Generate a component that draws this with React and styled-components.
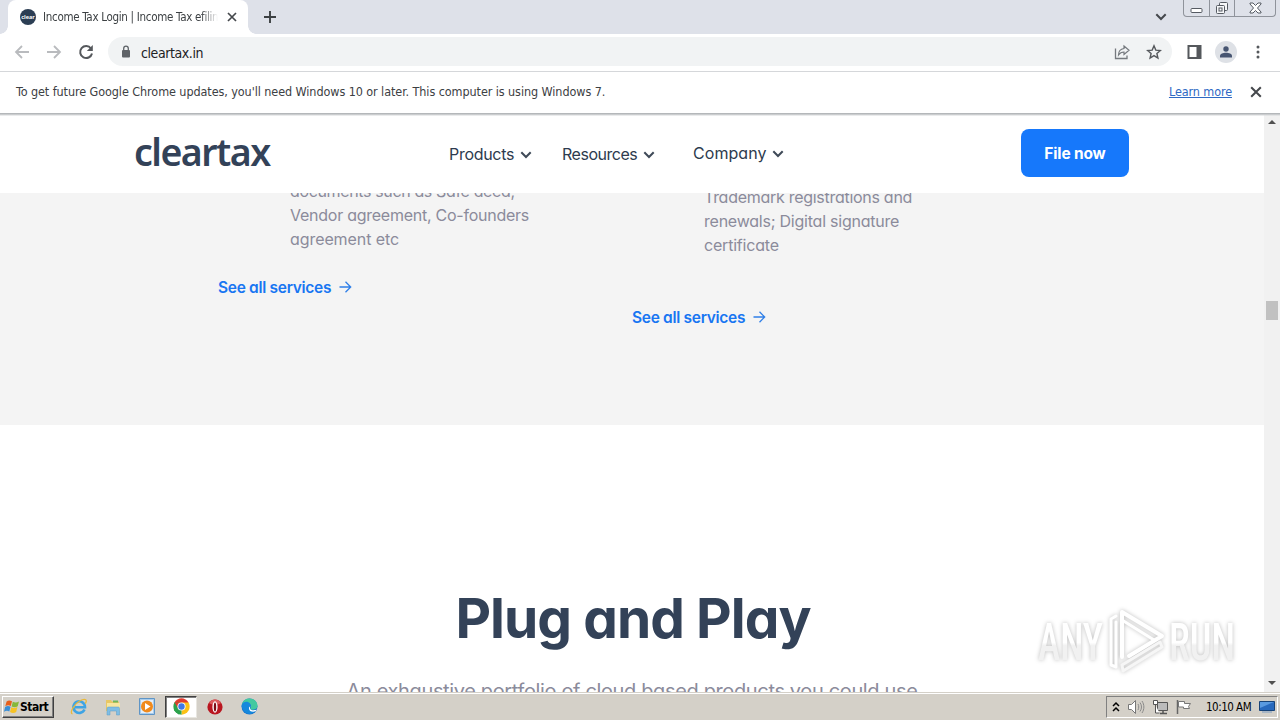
import React from 'react';
import styled, { createGlobalStyle, css } from 'styled-components';

const GlobalStyle = createGlobalStyle`
  * {
    box-sizing: border-box;
  }

  body {
    margin: 0;
    overflow: hidden;
    background: #fff;
  }

  svg {
    display: block;
    flex: none;
  }
`;

const uiFont = css`
  font-family: 'DejaVu Sans Condensed', 'DejaVu Sans', sans-serif;
  font-stretch: condensed;
`;

const siteFont = css`
  font-family: Inter, sans-serif;
  font-feature-settings: 'cv11' 1;
`;

const Desktop = styled.div`
  width: 1280px;
  height: 720px;
  display: flex;
  flex-direction: column;
  overflow: hidden;
  ${uiFont}
`;

/* browser chrome */

const TabStrip = styled.div`
  height: 34px;
  display: flex;
  align-items: flex-start;
  background: #dee1e9;
  padding-left: 8px;
`;

const Tab = styled.div`
  position: relative;
  width: 240px;
  height: 34px;
  display: flex;
  align-items: center;
  padding: 0 8px 0 12px;
  background: #fff;
  border-radius: 8px 8px 0 0;

  &::before,
  &::after {
    content: '';
    position: absolute;
    bottom: 0;
    width: 8px;
    height: 8px;
  }

  &::before {
    left: -8px;
    background: radial-gradient(circle at 0 0, transparent 7.5px, #fff 8px);
  }

  &::after {
    right: -8px;
    background: radial-gradient(circle at 100% 0, transparent 7.5px, #fff 8px);
  }
`;

const Favicon = styled.div`
  width: 16px;
  height: 16px;
  flex: none;
  border-radius: 50%;
  background: #2c3e54;
  color: #fff;
  font: bold 5.5px/16px 'Open Sans', sans-serif;
  text-align: center;
`;

const TabTitle = styled.span`
  width: 175px;
  margin-left: 7px;
  overflow: hidden;
  white-space: nowrap;
  font-size: 11.5px;
  line-height: 16px;
  color: #3c4043;
  letter-spacing: ${(p) => p.$spacing}px;
  mask-image: linear-gradient(to right, #000 158px, transparent 175px);
`;

const TabClose = styled.div`
  margin-left: 9px;
`;

const NewTab = styled.div`
  margin: 10px 0 0 15px;
`;

const WindowControls = styled.div`
  margin-left: auto;
  display: flex;
  align-items: flex-start;
`;

const TabSearch = styled.div`
  margin: 13px 16px 0 0;
`;

const CaptionButtons = styled.div`
  display: flex;
  width: 93px;
  height: 17px;
  margin-right: 4px;
  border: 1px solid #8f939b;
  border-top: 0;
  border-radius: 0 0 4px 4px;
`;

const CaptionButton = styled.div`
  width: ${(p) => p.$width}px;
  display: flex;
  justify-content: center;
  padding-top: 2px;

  & + & {
    border-left: 1px solid #8f939b;
  }
`;

const Toolbar = styled.div`
  height: 38px;
  display: flex;
  align-items: center;
  padding: 0 15px 2px 14px;
  background: #fff;
  border-bottom: 1px solid #d5d7da;
`;

const NavIcons = styled.div`
  display: flex;
  gap: 16px;
`;

const AddressBar = styled.div`
  width: 1064px;
  height: 29px;
  display: flex;
  align-items: center;
  margin-left: 14px;
  padding: 0 10px 0 12px;
  border-radius: 15px;
  background: #f1f3f4;
`;

const Url = styled.span`
  margin-left: 9px;
  padding-top: 2px;
  flex: 1;
  font-size: 14px;
  letter-spacing: ${(p) => p.$spacing}px;
  color: #202124;
`;

const AddressIcons = styled.div`
  display: flex;
  gap: 16px;
`;

const ToolbarActions = styled.div`
  display: flex;
  align-items: center;
  margin-left: auto;
`;

const Avatar = styled.div`
  width: 22px;
  height: 22px;
  display: flex;
  align-items: center;
  justify-content: center;
  margin: 0 14px 0 13px;
  border-radius: 50%;
  background: #dee1e6;
`;

const InfoBar = styled.div`
  height: 41px;
  display: flex;
  align-items: center;
  padding: 0 18px 1px 16px;
  background: #fff;
`;

const InfoText = styled.span`
  padding-bottom: 2px;
  font-size: 12.5px;
  letter-spacing: ${(p) => p.$spacing}px;
  color: #3c4043;
  white-space: nowrap;
`;

const InfoLink = styled.a`
  margin: 0 18px 0 auto;
  padding-bottom: 2px;
  font-size: 12.5px;
  letter-spacing: ${(p) => p.$spacing}px;
  color: #2e69c4;
  text-decoration: underline;
  white-space: nowrap;
`;

/* page */

const Viewport = styled.div`
  height: 579px;
  display: flex;
  overflow: hidden;
`;

const Page = styled.div`
  width: 1264px;
  position: relative;
  background: linear-gradient(#a9acb0, #d5d7d9 2px, #fff 3px);
  ${siteFont}
`;

const Header = styled.header`
  height: 80px;
  display: flex;
  align-items: flex-start;
  padding: 0 135px 0 134px;
`;

const Logo = styled.div`
  width: 315px;
  margin-top: 13px;
  font-family: 'Noto Sans', sans-serif;
  font-weight: 650;
  font-size: 37.5px;
  line-height: 52px;
  letter-spacing: ${(p) => p.$spacing}px;
  color: #334258;
`;

const Nav = styled.nav`
  display: flex;
  flex: 1;
`;

const NavItem = styled.div`
  width: ${(p) => p.$width}px;
  display: flex;
  align-items: center;
  gap: 6px;
  height: 20px;
  margin-top: ${(p) => p.$top}px;
  font-size: 16px;
  letter-spacing: ${(p) => p.$spacing}px;
  color: #2d3b4e;

  svg {
    margin-top: 2px;
  }
`;

const FileButton = styled.button`
  width: 108px;
  height: 48px;
  margin-top: 16px;
  border: 0;
  border-radius: 8px;
  background: #1678fb;
  color: #fff;
  font-size: 15.5px;
  font-weight: 650;
  letter-spacing: ${(p) => p.$spacing}px;
  ${siteFont}
`;

const Services = styled.section`
  height: 232px;
  display: flex;
  padding-left: 218px;
  overflow: hidden;
  background: #f4f4f4;
`;

const ServiceColumn = styled.div`
  width: 414px;
  margin-top: ${(p) => p.$top}px;
`;

const ServiceText = styled.p`
  margin: 0 0 ${(p) => p.$gap}px 72px;
  font-size: 16px;
  line-height: 24px;
  color: #8b8b9b;
`;

const ServiceLine = styled.span`
  display: block;
  white-space: nowrap;
  letter-spacing: ${(p) => p.$spacing}px;
`;

const ServiceLink = styled.a`
  display: flex;
  align-items: center;
  gap: 8px;
  height: 24px;
  font-size: 15.5px;
  font-weight: 600;
  letter-spacing: ${(p) => p.$spacing}px;
  color: #1876f2;
`;

const PlugSection = styled.section`
  display: flex;
  flex-direction: column;
  align-items: center;
  padding-top: 157px;
`;

const PlugTitle = styled.h2`
  margin: 0 0 23px 2px;
  font-size: 55px;
  line-height: 72px;
  font-weight: 650;
  letter-spacing: ${(p) => p.$spacing}px;
  color: #334258;
`;

const PlugText = styled.p`
  margin: 0;
  font-size: 20px;
  line-height: 28px;
  white-space: nowrap;
  letter-spacing: ${(p) => p.$spacing}px;
  color: #8b8b9b;
`;

const Scrollbar = styled.div`
  width: 16px;
  display: flex;
  flex-direction: column;
  align-items: center;
  justify-content: space-between;
  padding: 7px 0;
  background: linear-gradient(#a9acb0, #d5d7d9 2px, #f1f1f1 3px);
`;

const Track = styled.div`
  flex: 1;
  padding-top: 177px;
`;

const Thumb = styled.div`
  width: 12px;
  height: 19px;
  background: #c1c1c1;
`;

const Watermark = styled.div`
  position: absolute;
  left: 1032px;
  top: 490px;
  filter: drop-shadow(0 0 2px rgba(0, 0, 0, 0.26));
`;

/* taskbar */

const Taskbar = styled.div`
  height: 28px;
  display: flex;
  align-items: center;
  padding: 2px 2px;
  background: #d4d0c8;
  border-top: 1px solid #d4d0c8;
  box-shadow: inset 0 1px 0 #fff;
`;

const StartButton = styled.div`
  width: 52px;
  height: 22px;
  display: flex;
  align-items: center;
  padding-left: 1px;
  border: 1px solid;
  border-color: #fff #404040 #404040 #fff;
  box-shadow: inset -1px -1px 0 #808080;
  font-size: 12px;
  font-weight: bold;
  letter-spacing: ${(p) => p.$spacing}px;
  color: #000;
`;

const QuickLaunch = styled.div`
  display: flex;
  gap: 2px;
  margin-left: 9px;
`;

const LaunchSlot = styled.div`
  width: 32px;
  height: 22px;
  display: flex;
  align-items: center;
  justify-content: center;
  ${(p) =>
    p.$active &&
    css`
      background: #fff;
      border: 1px solid;
      border-color: #404040 #e8e6e0 #e8e6e0 #404040;
      box-shadow: inset 1px 1px 0 #808080;
    `}
`;

const Tray = styled.div`
  width: 172px;
  height: 22px;
  display: flex;
  align-items: center;
  margin-left: auto;
  padding-left: 5px;
  border: 1px solid;
  border-color: #808080 #fff #fff #808080;
`;

const TrayIcons = styled.div`
  display: flex;
  align-items: center;
  gap: 7px;
`;

const Clock = styled.span`
  width: 54px;
  margin: 0 -1px 0 14px;
  font-size: 11.5px;
  white-space: nowrap;
  letter-spacing: ${(p) => p.$spacing}px;
  color: #000;
`;

const CloseIcon = ({ size = 10 }) => (
  <svg width={size} height={size} viewBox="0 0 10 10">
    <path d="M1 1l8 8M9 1l-8 8" stroke="#45484c" strokeWidth="1.7" />
  </svg>
);

const Arrow = ({ flip }) => (
  <svg width="16" height="16" viewBox="0 0 16 16">
    <path
      d={flip ? 'M1 8h13M8 2l6 6-6 6' : 'M15 8H2M8 2L2 8l6 6'}
      fill="none"
      stroke="#b9bbbe"
      strokeWidth="1.8"
    />
  </svg>
);

const Chevron = ({ width = 12, stroke = '#3f4a58' }) => (
  <svg width={width} height="8" viewBox="0 0 12 8">
    <path d="M1.3 1.2L6 6l4.7-4.8" fill="none" stroke={stroke} strokeWidth="2" />
  </svg>
);

const LinkArrow = () => (
  <svg width="13" height="12" viewBox="0 0 13 12">
    <path d="M0.5 6H11M6.5 0.8L11.7 6l-5.2 5.2" fill="none" stroke="#2f7fe8" strokeWidth="1.3" />
  </svg>
);

const ScrollArrow = ({ down }) => (
  <svg width="8" height="4" viewBox="0 0 8 4">
    <path d={down ? 'M0 0h8L4 4z' : 'M0 4h8L4 0z'} fill="#505050" />
  </svg>
);

const AnyRunLogo = () => (
  <svg width="206" height="76" viewBox="0 0 206 76">
    <defs>
      <linearGradient id="fade" x1="0" y1="0" x2="0" y2="1">
        <stop offset="0.5" stopColor="#fff" />
        <stop offset="0.55" stopColor="#f1f1f1" />
      </linearGradient>
    </defs>
    <g fill="url(#fade)" fontFamily="Roboto, sans-serif" fontWeight="500" fontSize="52">
      <text x="6" y="57" textLength="65" lengthAdjust="spacingAndGlyphs">ANY</text>
      <text x="137" y="57" textLength="66" lengthAdjust="spacingAndGlyphs">RUN</text>
    </g>
    <g fill="none" stroke="#fff" strokeWidth="4" strokeLinejoin="round" strokeLinecap="round">
      <path d="M90 54V9l40 24-33 20" />
      <path d="M90 17l32 20" strokeWidth="3" />
      <path d="M84 13l-5 3v46l5 2V19" strokeWidth="3" />
      <path d="M90 62l38-23 2 5-39 24z" strokeWidth="3" stroke="#f6f6f6" />
    </g>
  </svg>
);

const WindowsFlag = () => (
  <svg width="16" height="16" viewBox="0 0 16 16">
    <path d="M2.6 2.5C4.500 1 6 1.200 8 2.300L6.800 7C5 6 3.300 6 1.300 7.200z" fill="#e8601c" />
    <path d="M8.800 2.800c2 1 4 1 6.200-.3L13.700 7.300c-2 1.300-4 1.200-6.100.2z" fill="#86b83a" />
    <path d="M1.100 8c2-1.200 3.700-1.100 5.500-.2L5.300 12.500C3.500 11.500 2 11.600 0 12.800z" fill="#3b8fd6" />
    <path d="M7.300 8.300c2 1 4 1 6.100-.2L12.200 13c-2 1.300-4.100 1.200-6.200.1z" fill="#f7c325" />
  </svg>
);

const IeIcon = () => (
  <svg width="18" height="18" viewBox="0 0 18 18">
    <path
      d="M14.500 11.500A5.800 5.800 0 1 1 15 9.200H5"
      fill="none"
      stroke="#3fa4e4"
      strokeWidth="2.600"
    />
    <path d="M2.500 16C-1 15 4 6 10 2.700c3-1.700 6-2 6.300 0 .2 1-.3 2-1 3" fill="none" stroke="#e9b93a" strokeWidth="1.300" />
  </svg>
);

const ExplorerIcon = () => (
  <svg width="18" height="18" viewBox="0 0 18 18">
    <path d="M2 2h5l1 1.500h7V13H2z" fill="#e8c765" />
    <path d="M3 5h13v8H3z" fill="#f7e6a0" />
    <path d="M9 2.500h5v2H9z" fill="#6fb65c" />
    <path d="M3 10.500c0-1 .5-1.500 1.500-1.500h9.500c1 0 1.500.5 1.500 1.500V17h-3v-4h-6.500v4H3z" fill="#7fbde4" stroke="#5a9cc8" strokeWidth="0.500" />
  </svg>
);

const MediaIcon = () => (
  <svg width="16" height="17" viewBox="0 0 16 17">
    <path d="M.5.5h15v16H.5z" fill="#a9cdec" stroke="#5f95c6" />
    <path d="M2 2h12v13H2z" fill="#e4effa" />
    <circle cx="8" cy="8.500" r="6" fill="#f08a1c" />
    <path d="M6 5l5.500 3.500L6 12z" fill="#fff" />
  </svg>
);

const ChromeIcon = () => (
  <svg width="17" height="17" viewBox="0 0 48 48">
    <path d="M24 24L4.100 12.500A23 23 0 0 1 43.900 12.500z" fill="#e33b2e" />
    <path d="M24 24L43.900 12.500A23 23 0 0 1 24 47z" fill="#fbc116" />
    <path d="M24 24V47A23 23 0 0 1 4.100 12.500z" fill="#2da24c" />
    <path d="M24 12.500h20L34 29.500z" fill="#fbc116" />
    <path d="M14 29.500L4.100 12.500 24 13z" fill="#2da24c" />
    <path d="M4.100 12.500h39.800H24L14 29z" fill="#e33b2e" />
    <path d="M4.100 12.500L14 29.800l10 5.700L17 47 3 35z" fill="#2da24c" />
    <circle cx="24" cy="24" r="11.500" fill="#fff" />
    <circle cx="24" cy="24" r="9" fill="#3f79e6" />
  </svg>
);

const OperaIcon = () => (
  <svg width="16" height="16" viewBox="0 0 16 16">
    <circle cx="8" cy="8" r="7.600" fill="#b91620" />
    <path d="M2 4a7 7 0 0 1 12 0c-3 2-9 2-12 0z" fill="#dc5a5c" />
    <ellipse cx="8" cy="8" rx="2.600" ry="5.800" fill="#fff" />
    <ellipse cx="8" cy="8" rx="1.200" ry="4.600" fill="#7c0c14" />
  </svg>
);

const EdgeIcon = () => (
  <svg width="17" height="17" viewBox="0 0 17 17">
    <circle cx="8.500" cy="8.500" r="8" fill="#1672cc" />
    <path d="M.7 7C2 2 5 .5 8.500.5c5 0 8 3.500 8 7.200 0 3-2.500 4-5 4-2 0-2.500-1-2-2 1.500-2-.3-4.200-3-4.200C4 5.500 2 6 .7 7z" fill="#43c9a0" />
    <path d="M.6 7.500C2 3 7 3 9 5.500c1 1.200 1 2.500.2 3.700C8 12 10 13.500 14.500 12.800 11 18 2 17 .6 7.500z" fill="#1688dc" />
    <path d="M9.500 8c-.8 1-1 3 1 3.900 2 .8 4 .2 5.300-.4l-1.200 1.800C11 14.500 7.500 13 8 9.500z" fill="#fff" />
  </svg>
);

const CaptionIcons = {
  minimize: (
    <svg width="13" height="13" viewBox="0 0 13 13">
      <rect x="1" y="6.500" width="11" height="4" rx="1" fill="#fff" stroke="#555a62" />
    </svg>
  ),
  restore: (
    <svg width="14" height="13" viewBox="0 0 14 13">
      <g fill="#f6f7f9" stroke="#555a62">
        <rect x="4.500" y="0.500" width="8" height="8" rx="1" />
        <rect x="1.500" y="3.500" width="8" height="8" rx="1" />
        <rect x="4" y="6" width="3" height="3" />
      </g>
    </svg>
  ),
  close: (
    <svg width="13" height="12" viewBox="0 0 13 12">
      <path
        d="M1 1h3l2.500 2.500L9 1h3v1L8.500 6l3.500 4v1H9L6.500 8.500 4 11H1v-1l3.500-4L1 2z"
        fill="#fff"
        stroke="#555a62"
      />
    </svg>
  ),
};

const BrowserTabs = () => (
  <TabStrip>
    <Tab>
      <Favicon>clear</Favicon>
      <TabTitle $spacing={-0.3}>Income Tax Login | Income Tax efiling</TabTitle>
      <TabClose>
        <CloseIcon />
      </TabClose>
    </Tab>
    <NewTab>
      <svg width="14" height="14" viewBox="0 0 14 14">
        <path d="M7 1v12M1 7h12" stroke="#3c4043" strokeWidth="1.900" />
      </svg>
    </NewTab>
    <WindowControls>
      <TabSearch>
        <Chevron stroke="#45484d" />
      </TabSearch>
      <CaptionButtons>
        <CaptionButton $width={25}>{CaptionIcons.minimize}</CaptionButton>
        <CaptionButton $width={25}>{CaptionIcons.restore}</CaptionButton>
        <CaptionButton $width={41}>{CaptionIcons.close}</CaptionButton>
      </CaptionButtons>
    </WindowControls>
  </TabStrip>
);

const BrowserToolbar = () => (
  <Toolbar>
    <NavIcons>
      <Arrow />
      <Arrow flip />
      <svg width="16" height="16" viewBox="0 0 16 16">
        <path d="M13 4.500A6 6 0 1 0 14 9.500" fill="none" stroke="#55585c" strokeWidth="2" />
        <path d="M14.800 1v6H8.800z" fill="#55585c" />
      </svg>
    </NavIcons>
    <AddressBar>
      <svg width="12" height="14" viewBox="0 0 12 14">
        <rect x="2" y="5" width="8" height="7.500" rx="1" fill="#5f6368" />
        <path d="M3.700 5.500V3.500a2.300 2.300 0 0 1 4.600 0v2" fill="none" stroke="#5f6368" strokeWidth="1.300" />
      </svg>
      <Url $spacing={-0.42}>cleartax.in</Url>
      <AddressIcons>
        <svg width="16" height="16" viewBox="0 0 16 16">
          <path d="M1.500 4.500v10h11.500v-3" fill="none" stroke="#75797e" strokeWidth="1.300" />
          <path
            d="M10 2l5 4.200-5 4.200V8c-2.500 0-4 .8-5.500 3 0-3.500 2-6 5.500-6.500z"
            fill="none"
            stroke="#75797e"
            strokeWidth="1.200"
          />
        </svg>
        <svg width="16" height="16" viewBox="0 0 16 16">
          <path
            d="M8 1.800l1.800 4.300 4.600.4-3.500 3 1 4.500L8 11.600 4.100 14l1-4.500-3.500-3 4.600-.4z"
            fill="none"
            stroke="#55585c"
            strokeWidth="1.400"
          />
        </svg>
      </AddressIcons>
    </AddressBar>
    <ToolbarActions>
      <svg width="15" height="14" viewBox="0 0 15 14">
        <rect x="1.500" y="1" width="12" height="12" fill="none" stroke="#55585c" strokeWidth="2" />
        <path d="M9.500 1h4v12h-4z" fill="#55585c" />
      </svg>
      <Avatar>
        <svg width="12" height="12" viewBox="0 0 12 12">
          <circle cx="6" cy="3" r="2.700" fill="#475571" />
          <path d="M0 11.500V10c0-2 3-3.200 6-3.200s6 1.200 6 3.200v1.500z" fill="#475571" />
        </svg>
      </Avatar>
      <svg width="14" height="14" viewBox="0 0 14 14" fill="#55585c">
        <circle cx="7" cy="2" r="1.500" />
        <circle cx="7" cy="7" r="1.500" />
        <circle cx="7" cy="12" r="1.500" />
      </svg>
    </ToolbarActions>
  </Toolbar>
);

const SiteHeader = () => (
  <Header>
    <Logo $spacing={-1.5}>cleartax</Logo>
    <Nav>
      <NavItem $width={113} $top={31} $spacing={-0.3}>
        Products <Chevron />
      </NavItem>
      <NavItem $width={131} $top={31} $spacing={-0.48}>
        Resources <Chevron />
      </NavItem>
      <NavItem $width={110} $top={30} $spacing={0.05}>
        Company <Chevron />
      </NavItem>
    </Nav>
    <FileButton $spacing={-0.15}>File now</FileButton>
  </Header>
);

const services = [
  {
    top: -14,
    gap: 24,
    lines: [
      ['documents such as Safe deed,', -0.36],
      ['Vendor agreement, Co-founders', -0.25],
      ['agreement etc', -0.08],
    ],
  },
  {
    top: -8,
    gap: 48,
    lines: [
      ['Trademark registrations and', -0.28],
      ['renewals; Digital signature', -0.23],
      ['certificate', -0.2],
    ],
  },
];

const SystemTray = () => (
  <Tray>
    <TrayIcons>
      <svg width="8" height="12" viewBox="0 0 8 12">
        <path d="M1 5l3-3 3 3M1 10l3-3 3 3" fill="none" stroke="#000" strokeWidth="1.500" />
      </svg>
      <svg width="18" height="16" viewBox="0 0 18 16">
        <path d="M1.500 5.500h3l4-4v13l-4-4h-3z" fill="#fff" stroke="#777" />
        <path d="M11 5c1 2 1 4 0 6M13 3.500c2 3 2 6 0 9M15 2c2.500 4 2.500 8 0 12" fill="none" stroke="#8a8a8a" />
      </svg>
      <svg width="17" height="16" viewBox="0 0 17 16">
        <path d="M5.500 3.500h10v8h-10z" fill="#bbb" stroke="#555" />
        <path d="M8 14.500h7M11 12v2" stroke="#555" strokeWidth="1.500" />
        <path d="M1.500 1.500h4v4h-4zM3.500 6v8h4" fill="#fff" stroke="#555" />
      </svg>
      <svg width="16" height="16" viewBox="0 0 16 16">
        <path d="M1.500 1v14" stroke="#666" strokeWidth="1.500" />
        <path d="M2.500 2.500h6v2h6l-2 3 1 2h-6v-1.500h-5z" fill="#fff" stroke="#777" />
      </svg>
    </TrayIcons>
    <Clock $spacing={-0.5}>10:10 AM</Clock>
    <svg width="16" height="14" viewBox="0 0 16 14">
      <path d="M.5 1.500h15v9H.5z" fill="#2869bd" stroke="#174378" />
      <path d="M1 2h14L1 8z" fill="#5a9ae0" />
      <path d="M3 12h10" stroke="#7c9bc0" />
    </svg>
  </Tray>
);

export default function App() {
  return (
    <Desktop>
      <GlobalStyle />
      <BrowserTabs />
      <BrowserToolbar />
      <InfoBar>
        <InfoText $spacing={-0.08}>
          To get future Google Chrome updates, you'll need Windows 10 or later. This computer is using Windows 7.
        </InfoText>
        <InfoLink $spacing={-0.1}>Learn more</InfoLink>
        <CloseIcon size={12} />
      </InfoBar>
      <Viewport>
        <Page>
          <SiteHeader />
          <Services>
            {services.map((service) => (
              <ServiceColumn key={service.top} $top={service.top}>
                <ServiceText $gap={service.gap}>
                  {service.lines.map(([text, spacing]) => (
                    <ServiceLine key={text} $spacing={spacing}>
                      {text}
                    </ServiceLine>
                  ))}
                </ServiceText>
                <ServiceLink $spacing={-0.3}>
                  See all services <LinkArrow />
                </ServiceLink>
              </ServiceColumn>
            ))}
          </Services>
          <PlugSection>
            <PlugTitle $spacing={-0.95}>Plug and Play</PlugTitle>
            <PlugText $spacing={-0.36}>An exhaustive portfolio of cloud based products you could use</PlugText>
          </PlugSection>
          <Watermark>
            <AnyRunLogo />
          </Watermark>
        </Page>
        <Scrollbar>
          <ScrollArrow />
          <Track>
            <Thumb />
          </Track>
          <ScrollArrow down />
        </Scrollbar>
      </Viewport>
      <Taskbar>
        <StartButton $spacing={-0.5}>
          <WindowsFlag />
          Start
        </StartButton>
        <QuickLaunch>
          <LaunchSlot>
            <IeIcon />
          </LaunchSlot>
          <LaunchSlot>
            <ExplorerIcon />
          </LaunchSlot>
          <LaunchSlot>
            <MediaIcon />
          </LaunchSlot>
          <LaunchSlot $active>
            <ChromeIcon />
          </LaunchSlot>
          <LaunchSlot>
            <OperaIcon />
          </LaunchSlot>
          <LaunchSlot>
            <EdgeIcon />
          </LaunchSlot>
        </QuickLaunch>
        <SystemTray />
      </Taskbar>
    </Desktop>
  );
}
